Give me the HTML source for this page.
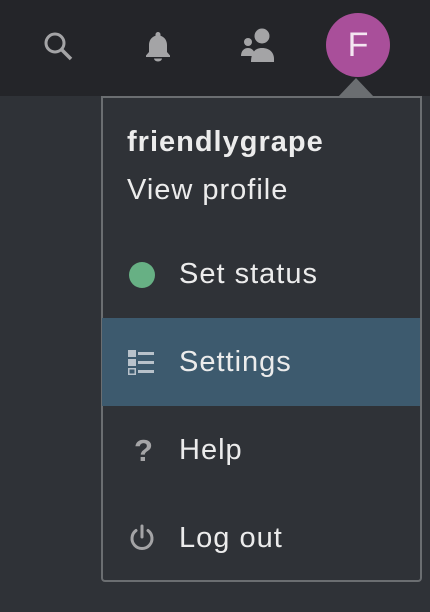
<!DOCTYPE html>
<html><head><meta charset="utf-8"><style>
*{margin:0;padding:0;box-sizing:border-box}
body{width:430px;height:612px;background:#2f3237;position:relative;overflow:hidden;font-family:"Liberation Sans",sans-serif;color:#ececec}
.hdr{position:absolute;left:0;top:0;width:430px;height:96px;background:#242529}
.av{position:absolute;left:326px;top:13px;width:64px;height:64px;border-radius:50%;background:#a94f9a;color:#f4e6f1;font-size:34px;line-height:64px;text-align:center}
.tri{position:absolute;left:338px;top:78px;width:0;height:0;border-left:18px solid transparent;border-right:18px solid transparent;border-bottom:19px solid #6b6e71}
.menu{position:absolute;left:101px;top:96px;width:321px;height:486px;border:2px solid #6b6e71;border-radius:0 0 4px 4px;background:#2f3237}
.t{position:absolute;font-size:29px;letter-spacing:1px;white-space:nowrap}
.hl{position:absolute;left:102px;top:318px;width:318px;height:88px;background:#3d5a6e}
</style></head><body>
<div class="hdr">
<svg style="position:absolute;left:40px;top:28px" width="36" height="36" viewBox="0 0 36 36"><circle cx="15" cy="15" r="9" fill="none" stroke="#a4a4a6" stroke-width="3"/><line x1="21.5" y1="21.5" x2="31" y2="31" stroke="#a4a4a6" stroke-width="3.5"/></svg>
<svg style="position:absolute;left:142px;top:30px" width="32" height="34" viewBox="0 0 32 34"><path d="M16 2a2.5 2.5 0 0 1 2.5 2.5v1.2C23 7 25 11 25 15v7l3 3.5v1.5H4v-1.5L7 22v-7c0-4 2-8 6.5-9.3V4.5A2.5 2.5 0 0 1 16 2z" fill="#a4a4a6"/><path d="M12 28.5h8a4 3 0 0 1-8 0z" fill="#a4a4a6"/></svg>
<svg style="position:absolute;left:238px;top:26px" width="42" height="40" viewBox="0 0 42 40"><circle cx="24" cy="10" r="7.5" fill="#a4a4a6"/><path d="M13 36c0-8 3-14 11-14s12 5 12 11v3z" fill="#a4a4a6"/><circle cx="10" cy="16" r="4" fill="#a4a4a6"/><path d="M3 30c0-5 3-8 7-8s7 3 7 8z" fill="#a4a4a6"/></svg>
</div>
<div class="av">F</div>
<div class="tri"></div>
<div class="menu"></div>
<div class="hl"></div>
<div class="t" style="left:127px;top:126px;font-weight:bold">friendlygrape</div>
<div class="t" style="left:127px;top:174px">View profile</div>
<div style="position:absolute;left:129px;top:262px;width:26px;height:26px;border-radius:50%;background:#67b084"></div>
<div class="t" style="left:179px;top:258px">Set status</div>
<svg style="position:absolute;left:127px;top:349px" width="28" height="28" viewBox="0 0 28 28"><rect x="1" y="1" width="8" height="7" fill="#b8c2cb"/><rect x="1" y="10" width="8" height="7" fill="#b8c2cb"/><rect x="1.75" y="19.75" width="6.5" height="5.5" fill="none" stroke="#b8c2cb" stroke-width="1.5"/><rect x="11" y="3" width="16" height="3" fill="#b8c2cb"/><rect x="11" y="12" width="16" height="3" fill="#b8c2cb"/><rect x="11" y="21" width="16" height="3" fill="#b8c2cb"/></svg>
<div class="t" style="left:179px;top:346px">Settings</div>
<div class="t" style="left:134px;top:433px;font-weight:bold;color:#a4a4a6;font-size:31px;letter-spacing:0">?</div>
<div class="t" style="left:179px;top:434px">Help</div>
<svg style="position:absolute;left:127px;top:523px" width="30" height="30" viewBox="0 0 30 30"><path d="M9 7.5A10 10 0 1 0 21 7.5" fill="none" stroke="#a4a4a6" stroke-width="3" stroke-linecap="round"/><line x1="15" y1="3" x2="15" y2="14" stroke="#a4a4a6" stroke-width="3" stroke-linecap="round"/></svg>
<div class="t" style="left:179px;top:522px">Log out</div>
</body></html>
